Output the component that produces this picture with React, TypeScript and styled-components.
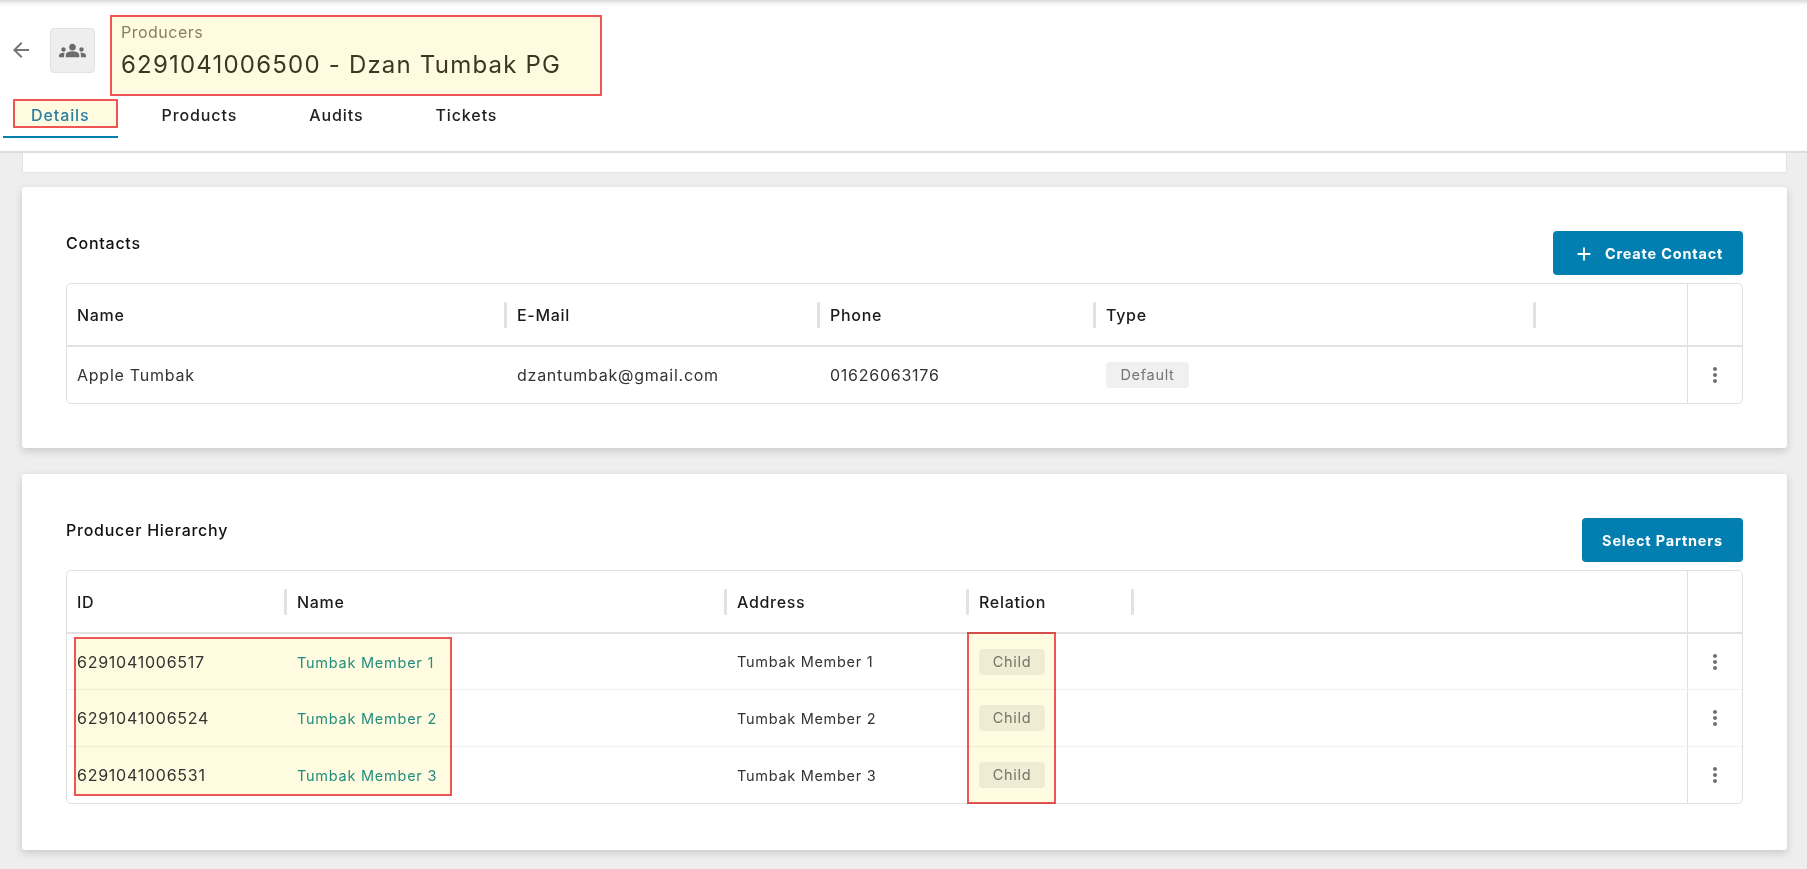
import React from "react";
import styled, { createGlobalStyle } from "styled-components";
import { MdAdd, MdArrowBack, MdGroups, MdMoreVert } from "react-icons/md";

const GlobalStyle = createGlobalStyle`
  html, body {
    margin: 0;
    padding: 0;
    height: 869px;
    overflow: hidden;
    background: #eeeeee;
    font-family: "Inter", "Noto Sans", sans-serif;
  }
  * { box-sizing: border-box; }
`;

const Page = styled.div`
  width: 1807px;
  height: 869px;
  background: #eeeeee;
`;

const Header = styled.header`
  height: 153px;
  background: #fff;
  border-bottom: 2px solid #dddddd;
  box-shadow: inset 0 6px 5px -4px rgba(0, 0, 0, 0.18);
  display: flex;
  flex-direction: column;
`;

const TitleRow = styled.div`
  display: flex;
  align-items: flex-start;
  padding: 15px 0 0 11px;
  height: 99px;
`;

const BackButton = styled.div`
  width: 24px;
  height: 24px;
  margin: 23px 17px 0 -2px;
  color: #757575;
  font-size: 24px;
  display: flex;
`;

const IconBox = styled.div`
  width: 45px;
  height: 45px;
  margin: 13px 15px 0 0;
  background: #eeeeee;
  border: 1px solid #e2e2e2;
  border-radius: 4px;
  color: #6b6b6b;
  font-size: 27px;
  display: flex;
  align-items: center;
  justify-content: center;
`;

const TitleBox = styled.div`
  width: 492px;
  height: 81px;
  padding: 3px 0 0 9px;
  background: #fffbe1;
  border: 2px solid #f05555;
`;

const Breadcrumb = styled.div`
  font-size: 16px;
  line-height: 24px;
  letter-spacing: 0.5px;
  color: #85805f;
`;

const Title = styled.div`
  margin-top: 3px;
  font-size: 24px;
  line-height: 36px;
  letter-spacing: 1.2px;
  color: #3b3722;
`;

const Tabs = styled.nav`
  display: flex;
  gap: 16px;
  padding-left: 3px;
  height: 39px;
`;

const Tab = styled.div<{ $active?: boolean }>`
  position: relative;
  height: 39px;
  padding: 4px 28px 0;
  margin-bottom: -2px;
  font-size: 16px;
  line-height: 24px;
  font-weight: 500;
  letter-spacing: 0.9px;
  color: ${(p) => (p.$active ? "#2a80bd" : "#222222")};
  border-bottom: 2px solid ${(p) => (p.$active ? "#017fb1" : "transparent")};
`;

const Highlight = styled.span<{ $top: number; $left: number; $width: number; $height: number }>`
  position: absolute;
  top: ${(p) => p.$top}px;
  left: ${(p) => p.$left}px;
  width: ${(p) => p.$width}px;
  height: ${(p) => p.$height}px;
  background: #fffbe1;
  border: 2px solid #f05555;
  mix-blend-mode: multiply;
  pointer-events: none;
`;

const Content = styled.main`
  padding: 0 20px 0 22px;
  display: flex;
  flex-direction: column;
`;

const CutCard = styled.div`
  height: 20px;
  background: #fff;
  border: 1px solid #e3e3e3;
  border-top: 0;
`;

const Card = styled.section<{ $gap: number; $height: number }>`
  height: ${(p) => p.$height}px;
  margin-top: ${(p) => p.$gap}px;
  padding: 44px 44px 0;
  background: #fff;
  border-radius: 3px;
  box-shadow: 0 3px 8px rgba(0, 0, 0, 0.16);
`;

const CardHead = styled.div`
  display: flex;
  justify-content: space-between;
  align-items: flex-start;
  height: 52px;
`;

const CardTitle = styled.h2`
  margin: 0;
  font-size: 16px;
  line-height: 24px;
  font-weight: 500;
  letter-spacing: 0.75px;
  color: #111;
`;

const Button = styled.button<{ $width: number }>`
  width: ${(p) => p.$width}px;
  height: 44px;
  border: 0;
  border-radius: 4px;
  background: #027fb0;
  color: #fff;
  font-family: inherit;
  font-size: 14.5px;
  font-weight: 700;
  letter-spacing: 0.8px;
  display: flex;
  align-items: center;
  justify-content: center;
  gap: 10px;
  padding: 0;

  svg {
    font-size: 22px;
    margin-top: 2px;
  }
`;

const Table = styled.div`
  position: relative;
  border: 1px solid #e0e0e0;
  border-radius: 5px;
`;

const Row = styled.div<{ $cols: string; $height: number; $head?: boolean }>`
  display: grid;
  grid-template-columns: ${(p) => p.$cols};
  height: ${(p) => p.$height}px;
  border-top: ${(p) => (p.$head ? "0" : "1px solid #f1f1f1")};
  align-items: center;

  &:nth-child(2) {
    border-top: 2px solid #e2e2e2;
  }
`;

const HeadCell = styled.div<{ $noLine?: boolean }>`
  position: relative;
  height: 100%;
  padding-left: 10px;
  display: flex;
  align-items: center;
  font-size: 16px;
  font-weight: 500;
  letter-spacing: 0.7px;
  color: #1b1b1b;

  &::after {
    content: "";
    display: ${(p) => (p.$noLine ? "none" : "block")};
    position: absolute;
    right: 0;
    top: 18px;
    width: 3px;
    height: 26px;
    border-radius: 1px;
    background: #e2e2e2;
  }
`;

const Cell = styled.div<{ $small?: boolean }>`
  padding-left: 10px;
  font-size: ${(p) => (p.$small ? "14.5px" : "16px")};
  font-weight: 400;
  letter-spacing: ${(p) => (p.$small ? "0.7px" : "0.75px")};
  color: #333;
`;

const NameLink = styled.a`
  color: #22908f;
  font-size: 14.5px;
  letter-spacing: 0.75px;
`;

const Badge = styled.span<{ $width: number }>`
  display: inline-block;
  width: ${(p) => p.$width}px;
  height: 26px;
  line-height: 26px;
  border-radius: 4px;
  background: #f0f0f0;
  color: #757575;
  font-size: 14.5px;
  letter-spacing: 0.7px;
  text-align: center;
`;

const ActionCell = styled.div`
  height: 100%;
  border-left: 1px solid #e0e0e0;
  display: flex;
  align-items: center;
  justify-content: center;
  color: #707070;
  font-size: 24px;
`;

const contactCols = "440px 313px 276px 440px 151px 1fr";
const hierarchyCols = "220px 440px 242px 165px 553px 1fr";

const members = [
  { id: "6291041006517", name: "Tumbak Member 1" },
  { id: "6291041006524", name: "Tumbak Member 2" },
  { id: "6291041006531", name: "Tumbak Member 3" },
];

const App = () => {
  return (
    <Page>
      <GlobalStyle />
      <Header>
        <TitleRow>
          <BackButton>
            <MdArrowBack />
          </BackButton>
          <IconBox>
            <MdGroups />
          </IconBox>
          <TitleBox>
            <Breadcrumb>Producers</Breadcrumb>
            <Title>6291041006500 - Dzan Tumbak PG</Title>
          </TitleBox>
        </TitleRow>
        <Tabs>
          <Tab $active>
            Details
            <Highlight $top={0} $left={10} $width={105} $height={29} />
          </Tab>
          <Tab>Products</Tab>
          <Tab>Audits</Tab>
          <Tab>Tickets</Tab>
        </Tabs>
      </Header>

      <Content>
        <CutCard />

        <Card $gap={14} $height={261}>
          <CardHead>
            <CardTitle>Contacts</CardTitle>
            <Button $width={190}>
              <MdAdd />
              Create Contact
            </Button>
          </CardHead>
          <Table>
            <Row $cols={contactCols} $height={61} $head>
              <HeadCell>Name</HeadCell>
              <HeadCell>E-Mail</HeadCell>
              <HeadCell>Phone</HeadCell>
              <HeadCell>Type</HeadCell>
              <HeadCell $noLine />
              <ActionCell />
            </Row>
            <Row $cols={contactCols} $height={58}>
              <Cell>Apple Tumbak</Cell>
              <Cell>dzantumbak@gmail.com</Cell>
              <Cell>01626063176</Cell>
              <Cell>
                <Badge $width={83}>Default</Badge>
              </Cell>
              <Cell />
              <ActionCell>
                <MdMoreVert />
              </ActionCell>
            </Row>
          </Table>
        </Card>

        <Card $gap={26} $height={376}>
          <CardHead>
            <CardTitle>Producer Hierarchy</CardTitle>
            <Button $width={161}>Select Partners</Button>
          </CardHead>
          <Table>
            <Row $cols={hierarchyCols} $height={61} $head>
              <HeadCell>ID</HeadCell>
              <HeadCell>Name</HeadCell>
              <HeadCell>Address</HeadCell>
              <HeadCell>Relation</HeadCell>
              <HeadCell $noLine />
              <ActionCell />
            </Row>
            {members.map((m) => (
              <Row key={m.id} $cols={hierarchyCols} $height={57}>
                <Cell>{m.id}</Cell>
                <Cell>
                  <NameLink>{m.name}</NameLink>
                </Cell>
                <Cell $small>{m.name}</Cell>
                <Cell>
                  <Badge $width={66}>Child</Badge>
                </Cell>
                <Cell />
                <ActionCell>
                  <MdMoreVert />
                </ActionCell>
              </Row>
            ))}
            <Highlight $top={66} $left={7} $width={378} $height={159} />
            <Highlight $top={61} $left={900} $width={89} $height={172} />
          </Table>
        </Card>
      </Content>
    </Page>
  );
};

export default App;
